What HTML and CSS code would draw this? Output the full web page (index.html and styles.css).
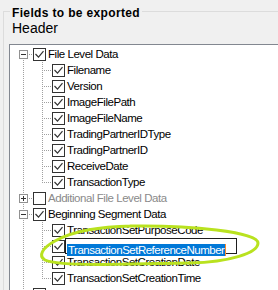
FILE: index.html
```html
<!DOCTYPE html>
<html lang="en">
<head>
  <meta charset="UTF-8">
  <title>Fields to be exported</title>
  <link rel="stylesheet" href="styles.css">
</head>
<body>
<div class="Group">
  <div class="Group__Title">Fields to be exported</div>
  <div class="Group__Header">Header</div>

  <div class="Tree">
    <div class="Node">
      <span class="Line Line--first"><svg class="Expander" viewBox="0 0 9 9"><rect x=".5" y=".5" width="8" height="8"/><path d="M2 4.5h5"/></svg></span>
      <svg class="Check" viewBox="0 0 13 13"><rect x=".5" y=".5" width="12" height="12"/><path d="M2.5 6l3 3.2 5-6"/></svg>
      <span class="Node__Label">File Level Data</span>
    </div>
    <div class="Node">
      <span class="Line Line--pipe"></span><span class="Line Line--tee"></span>
      <svg class="Check" viewBox="0 0 13 13"><rect x=".5" y=".5" width="12" height="12"/><path d="M2.5 6l3 3.2 5-6"/></svg>
      <span class="Node__Label">Filename</span>
    </div>
    <div class="Node">
      <span class="Line Line--pipe"></span><span class="Line Line--tee"></span>
      <svg class="Check" viewBox="0 0 13 13"><rect x=".5" y=".5" width="12" height="12"/><path d="M2.5 6l3 3.2 5-6"/></svg>
      <span class="Node__Label">Version</span>
    </div>
    <div class="Node">
      <span class="Line Line--pipe"></span><span class="Line Line--tee"></span>
      <svg class="Check" viewBox="0 0 13 13"><rect x=".5" y=".5" width="12" height="12"/><path d="M2.5 6l3 3.2 5-6"/></svg>
      <span class="Node__Label">ImageFilePath</span>
    </div>
    <div class="Node">
      <span class="Line Line--pipe"></span><span class="Line Line--tee"></span>
      <svg class="Check" viewBox="0 0 13 13"><rect x=".5" y=".5" width="12" height="12"/><path d="M2.5 6l3 3.2 5-6"/></svg>
      <span class="Node__Label">ImageFileName</span>
    </div>
    <div class="Node">
      <span class="Line Line--pipe"></span><span class="Line Line--tee"></span>
      <svg class="Check" viewBox="0 0 13 13"><rect x=".5" y=".5" width="12" height="12"/><path d="M2.5 6l3 3.2 5-6"/></svg>
      <span class="Node__Label">TradingPartnerIDType</span>
    </div>
    <div class="Node">
      <span class="Line Line--pipe"></span><span class="Line Line--tee"></span>
      <svg class="Check" viewBox="0 0 13 13"><rect x=".5" y=".5" width="12" height="12"/><path d="M2.5 6l3 3.2 5-6"/></svg>
      <span class="Node__Label">TradingPartnerID</span>
    </div>
    <div class="Node">
      <span class="Line Line--pipe"></span><span class="Line Line--tee"></span>
      <svg class="Check" viewBox="0 0 13 13"><rect x=".5" y=".5" width="12" height="12"/><path d="M2.5 6l3 3.2 5-6"/></svg>
      <span class="Node__Label">ReceiveDate</span>
    </div>
    <div class="Node">
      <span class="Line Line--pipe"></span><span class="Line Line--elbow"></span>
      <svg class="Check" viewBox="0 0 13 13"><rect x=".5" y=".5" width="12" height="12"/><path d="M2.5 6l3 3.2 5-6"/></svg>
      <span class="Node__Label">TransactionType</span>
    </div>

    <div class="Node Node--disabled">
      <span class="Line Line--tee"><svg class="Expander" viewBox="0 0 9 9"><rect x=".5" y=".5" width="8" height="8"/><path d="M2 4.5h5M4.5 2v5"/></svg></span>
      <svg class="Check" viewBox="0 0 13 13"><rect x=".5" y=".5" width="12" height="12"/></svg>
      <span class="Node__Label">Additional File Level Data</span>
    </div>

    <div class="Node">
      <span class="Line Line--tee"><svg class="Expander" viewBox="0 0 9 9"><rect x=".5" y=".5" width="8" height="8"/><path d="M2 4.5h5"/></svg></span>
      <svg class="Check" viewBox="0 0 13 13"><rect x=".5" y=".5" width="12" height="12"/><path d="M2.5 6l3 3.2 5-6"/></svg>
      <span class="Node__Label">Beginning Segment Data</span>
    </div>
    <div class="Node">
      <span class="Line Line--pipe"></span><span class="Line Line--tee"></span>
      <svg class="Check" viewBox="0 0 13 13"><rect x=".5" y=".5" width="12" height="12"/><path d="M2.5 6l3 3.2 5-6"/></svg>
      <span class="Node__Label">TransactionSetPurposeCode</span>
    </div>
    <div class="Node">
      <span class="Line Line--pipe"></span><span class="Line Line--tee"></span>
      <svg class="Check" viewBox="0 0 13 13"><rect x=".5" y=".5" width="12" height="12"/><path d="M2.5 6l3 3.2 5-6"/></svg>
      <!-- label is being renamed: edit box with the whole text selected -->
      <span class="Node__Edit"><span class="Node__Selection">TransactionSetReferenceNumber</span></span>
    </div>
    <div class="Node">
      <span class="Line Line--pipe"></span><span class="Line Line--tee"></span>
      <svg class="Check" viewBox="0 0 13 13"><rect x=".5" y=".5" width="12" height="12"/><path d="M2.5 6l3 3.2 5-6"/></svg>
      <span class="Node__Label">TransactionSetCreationDate</span>
    </div>
    <div class="Node">
      <span class="Line Line--pipe"></span><span class="Line Line--elbow"></span>
      <svg class="Check" viewBox="0 0 13 13"><rect x=".5" y=".5" width="12" height="12"/><path d="M2.5 6l3 3.2 5-6"/></svg>
      <span class="Node__Label">TransactionSetCreationTime</span>
    </div>

    <div class="Node">
      <span class="Line Line--tee"><svg class="Expander" viewBox="0 0 9 9"><rect x=".5" y=".5" width="8" height="8"/><path d="M2 4.5h5M4.5 2v5"/></svg></span>
      <svg class="Check" viewBox="0 0 13 13"><rect x=".5" y=".5" width="12" height="12"/><path d="M2.5 6l3 3.2 5-6"/></svg>
      <span class="Node__Label">Information Segment Data</span>
    </div>
  </div>
</div>

<!-- hand-drawn highlight around the edited node -->
<svg class="Marker" viewBox="0 0 278 290">
  <path d="M130 226C190 225 258 232 258 243C258 253 230 262 190 263L130 264C90 265 55 265 45 260C38 256 42 248 55 241C75 230 100 227 132 226"/>
</svg>
</body>
</html>
```

FILE: styles.css
```css
html, body {
  margin: 0;
  padding: 0;
  height: 290px;
  overflow: hidden;
}

body {
  background-color: #f0f0f0;
  font-family: "Liberation Sans", Arial, sans-serif;
  color: #000000;
}

.Group {
  margin: 11px 0 0 3px;
  border-top: 1px solid #dcdcdc;
  border-left: 1px solid #dcdcdc;
}

.Group__Title {
  width: fit-content;
  margin: -6px 0 0 6px;
  padding: 0 2px;
  background-color: #f0f0f0;
  font-weight: bold;
  font-size: 12px;
  line-height: 14px;
  letter-spacing: 0.35px;
}

.Group__Header {
  margin-left: 8px;
  font-size: 14px;
  line-height: 16px;
}

/* the list runs on past the bottom of the window */
.Tree {
  margin: 8px 0 0 5px;
  padding: 1px 0 0 4px;
  height: 244px;
  overflow: hidden;
  background-color: #ffffff;
  border-top: 1px solid #828790;
  border-left: 1px solid #828790;
}

.Node {
  display: flex;
  height: 16px;
  white-space: nowrap;
}

.Node--disabled .Node__Label {
  color: #8a8a8a;
}

/* connector cells, one per indent level; dotted lines drawn with gradients */
.Line {
  flex: none;
  display: flex;
  width: 19px;
  height: 16px;
  background-repeat: no-repeat;
}

.Line--pipe {
  background-image: repeating-linear-gradient(to bottom, #a0a0a0 0 1px, transparent 1px 2px);
  background-size: 1px 16px;
  background-position: 9px 0;
}

.Line--tee,
.Line--elbow,
.Line--first {
  background-image:
    repeating-linear-gradient(to bottom, #a0a0a0 0 1px, transparent 1px 2px),
    repeating-linear-gradient(to right, #a0a0a0 0 1px, transparent 1px 2px);
  background-size: 1px 16px, 10px 1px;
  background-position: 9px 0, 9px 8px;
}

.Line--elbow {
  background-size: 1px 9px, 10px 1px;
}

.Line--first {
  background-size: 1px 8px, 10px 1px;
  background-position: 9px 8px, 9px 8px;
}

.Expander {
  width: 9px;
  height: 9px;
  margin: 4px 0 0 5px;
}

.Expander rect {
  fill: #ffffff;
  stroke: #919191;
}

.Expander path {
  stroke: #333333;
  fill: none;
}

.Check {
  flex: none;
  width: 13px;
  height: 13px;
  margin-top: 2px;
}

.Check rect {
  fill: #ffffff;
  stroke: #333333;
}

.Check path {
  fill: none;
  stroke: #333333;
  stroke-width: 1.2;
}

.Node__Label {
  margin-left: 2px;
  font-size: 11.5px;
  line-height: 16px;
  letter-spacing: -0.45px;
}

.Node__Edit {
  box-sizing: border-box;
  width: 172px;
  height: 16px;
  padding: 1px;
  border: 1px solid #1e1e1e;
  background-color: #ffffff;
}

.Node__Selection {
  display: inline-block;
  height: 12px;
  padding: 0 1px;
  background-color: #0078d7;
  border-right: 1px solid #ff8a2b;
  color: #ffffff;
  font-size: 11.5px;
  line-height: 12px;
  letter-spacing: -0.5px;
}

.Marker {
  position: absolute;
  top: 0;
  left: 0;
  width: 278px;
  height: 290px;
  pointer-events: none;
}

.Marker path {
  fill: none;
  stroke: #b9e21f;
  stroke-width: 3;
  stroke-linecap: round;
}
```
